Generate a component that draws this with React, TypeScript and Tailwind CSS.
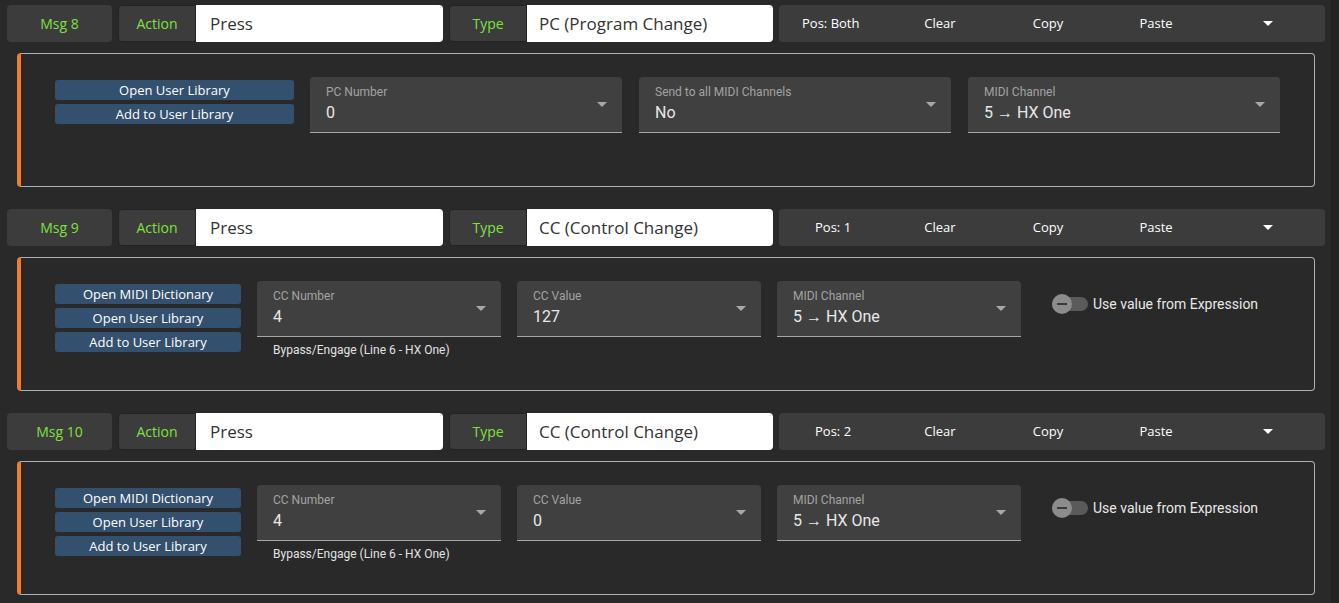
import { useState } from 'react'

type SelectField = {
  label: string
  value: string
  helper?: string
}

type MessageConfig = {
  msg: string
  type: string
  pos: string
  posPadClassName: string
  buttons: string[]
  buttonWidthClassName: string
  selectWidthClassName: string
  selectGapClassName: string
  fields: SelectField[]
  showExpression: boolean
}

const headFont = { fontFamily: '"Open Sans", "Liberation Sans", sans-serif' }
const bodyFont = { fontFamily: 'Roboto, "Liberation Sans", sans-serif' }

const messages: MessageConfig[] = [
  {
    msg: 'Msg 8',
    type: 'PC (Program Change)',
    pos: 'Pos: Both',
    posPadClassName: 'pl-[23px]',
    buttons: ['Open User Library', 'Add to User Library'],
    buttonWidthClassName: 'w-[239px]',
    selectWidthClassName: 'w-[312px]',
    selectGapClassName: 'gap-[17px]',
    fields: [
      { label: 'PC Number', value: '0' },
      { label: 'Send to all MIDI Channels', value: 'No' },
      { label: 'MIDI Channel', value: '5 → HX One' },
    ],
    showExpression: false,
  },
  {
    msg: 'Msg 9',
    type: 'CC (Control Change)',
    pos: 'Pos: 1',
    posPadClassName: 'pl-[36px]',
    buttons: ['Open MIDI Dictionary', 'Open User Library', 'Add to User Library'],
    buttonWidthClassName: 'w-[186px]',
    selectWidthClassName: 'w-[244px]',
    selectGapClassName: 'gap-[16px]',
    fields: [
      { label: 'CC Number', value: '4', helper: 'Bypass/Engage (Line 6 - HX One)' },
      { label: 'CC Value', value: '127' },
      { label: 'MIDI Channel', value: '5 → HX One' },
    ],
    showExpression: true,
  },
  {
    msg: 'Msg 10',
    type: 'CC (Control Change)',
    pos: 'Pos: 2',
    posPadClassName: 'pl-[36px]',
    buttons: ['Open MIDI Dictionary', 'Open User Library', 'Add to User Library'],
    buttonWidthClassName: 'w-[186px]',
    selectWidthClassName: 'w-[244px]',
    selectGapClassName: 'gap-[16px]',
    fields: [
      { label: 'CC Number', value: '4', helper: 'Bypass/Engage (Line 6 - HX One)' },
      { label: 'CC Value', value: '0' },
      { label: 'MIDI Channel', value: '5 → HX One' },
    ],
    showExpression: true,
  },
]

const Caret = ({ className }: { className: string }) => (
  <svg aria-hidden="true" className={className} viewBox="0 0 10 5" width="10" height="5">
    <path d="M0 0h10L5 5z" fill="currentColor" />
  </svg>
)

const MessageHeader = ({ config }: { config: MessageConfig }) => (
  <div className="flex h-[37px] items-stretch gap-[6px]" style={headFont}>
    <div className="flex w-[105px] items-center justify-center rounded-[4px] bg-[#3c3c3c] text-[14px] text-[#7ee23c]">
      {config.msg}
    </div>
    <div className="flex w-[325px] rounded-[4px]">
      <div className="flex w-[78px] items-center justify-center rounded-l-[4px] border border-[#222] bg-[#3c3c3c] text-[14px] text-[#7ee23c]">
        Action
      </div>
      <div className="flex flex-1 items-center rounded-r-[4px] bg-white pl-[14px] text-[17px] text-[#333]">
        Press
      </div>
    </div>
    <div className="flex w-[324px] rounded-[4px]">
      <div className="flex w-[78px] items-center justify-center rounded-l-[4px] border border-[#222] bg-[#3c3c3c] text-[14px] text-[#7ee23c]">
        Type
      </div>
      <div className="flex flex-1 items-center rounded-r-[4px] bg-white pl-[12px] text-[17px] text-[#333]">
        {config.type}
      </div>
    </div>
    <div className="flex w-[546px] items-center rounded-[4px] bg-[#3c3c3c] text-[13px] text-white">
      <div className={`w-[107px] whitespace-nowrap ${config.posPadClassName}`}>{config.pos}</div>
      <div className="w-[108px] text-center">Clear</div>
      <div className="w-[108px] text-center">Copy</div>
      <div className="w-[108px] text-center">Paste</div>
      <div className="flex flex-1 justify-center">
        <Caret className="text-white" />
      </div>
    </div>
  </div>
)

const Select = ({
  field,
  widthClassName,
}: {
  field: SelectField
  widthClassName: string
}) => (
  <div className={`${widthClassName} shrink-0`} style={bodyFont}>
    <div className="relative h-[56px] rounded-t-[4px] border-b border-[#a6a6a6] bg-[#404040] px-[16px] pt-[7px]">
      <div className="text-[12px] leading-[16px] text-[#a3a3a3]">{field.label}</div>
      <div className="mt-[3px] text-[16px] leading-[20px] text-[#e8e8e8]">{field.value}</div>
      <Caret className="absolute right-[15px] top-[25px] text-[#a8a8a8]" />
    </div>
    {field.helper && (
      <div className="mt-[5px] px-[16px] text-[12px] leading-[16px] text-[#e2e2e2]">
        {field.helper}
      </div>
    )}
  </div>
)

const ExpressionToggle = () => {
  const [enabled, setEnabled] = useState(false)
  return (
    <button
      className="ml-[31px] mt-[13px] flex h-[20px] items-center self-start"
      onClick={() => setEnabled(!enabled)}
      style={bodyFont}
      type="button"
    >
      <span className="relative h-[14px] w-[36px] rounded-full bg-[#5a5a5a]">
        <span
          className={`absolute top-[-3px] flex size-[20px] items-center justify-center rounded-full bg-[#8c8c8c] ${
            enabled ? 'left-[16px]' : 'left-0'
          }`}
        >
          <span className="h-[2px] w-[10px] bg-[#3a3a3a]" />
        </span>
      </span>
      <span className="ml-[5px] text-[14px] text-[#e8e8e8]">Use value from Expression</span>
    </button>
  )
}

const MessagePanel = ({ config }: { config: MessageConfig }) => (
  <div className="mx-[10px] mt-[11px] flex h-[134px] items-start rounded-[4px] border border-l-[4px] border-[#a9b0b8] border-l-[#f07b31] pl-[34px] pt-[23px]">
    <div className={`mt-[3px] flex flex-col gap-[4px] ${config.buttonWidthClassName}`} style={headFont}>
      {config.buttons.map((label) => (
        <button
          className="h-[20px] rounded-[3px] bg-[#33506f] text-[13px] leading-[20px] text-white"
          key={label}
          type="button"
        >
          {label}
        </button>
      ))}
    </div>
    <div className={`ml-[16px] flex items-start ${config.selectGapClassName}`}>
      {config.fields.map((field) => (
        <Select field={field} key={field.label} widthClassName={config.selectWidthClassName} />
      ))}
    </div>
    {config.showExpression && <ExpressionToggle />}
  </div>
)

const App = () => (
  <div className="flex h-[603px] w-[1339px] overflow-hidden bg-[#292929]">
    <div className="w-[1331px] pl-[7px] pr-[6px] pt-[5px]">
      {messages.map((config) => (
        <div className="mb-[22px]" key={config.msg}>
          <MessageHeader config={config} />
          <MessagePanel config={config} />
        </div>
      ))}
    </div>
    <div className="flex-1 bg-[#232323]" />
  </div>
)

export default App
